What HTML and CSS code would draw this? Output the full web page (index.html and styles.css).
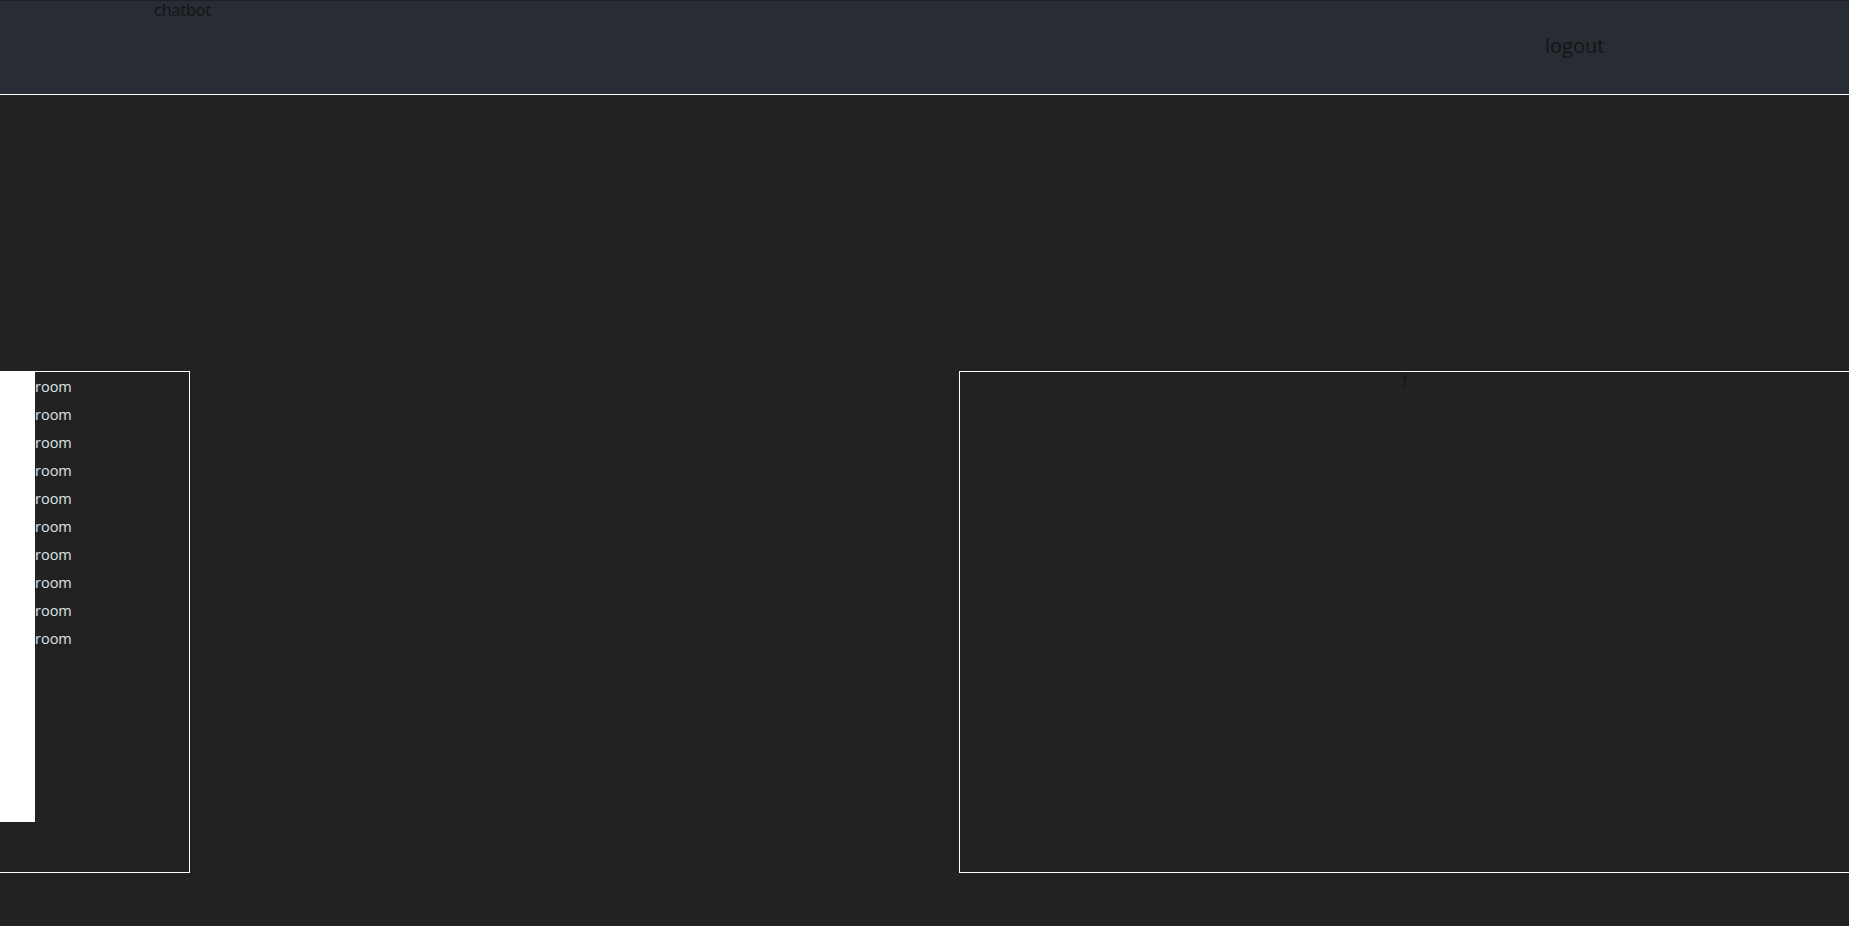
FILE: index.html
```html
<!DOCTYPE html>
<html lang="en">
<head>
<meta charset="utf-8">
<title>chatbot</title>
<link rel="stylesheet" href="styles.css">
</head>
<body>
<div class="app">
  <header class="top-bar">
    <div class="brand">chatbot</div>
    <div class="logout">logout</div>
  </header>
  <main class="workspace">
    <section class="rooms-panel">
      <div class="rooms-strip"></div>
      <ul class="room-list">
        <li class="room-item">room</li>
        <li class="room-item">room</li>
        <li class="room-item">room</li>
        <li class="room-item">room</li>
        <li class="room-item">room</li>
        <li class="room-item">room</li>
        <li class="room-item">room</li>
        <li class="room-item">room</li>
        <li class="room-item">room</li>
        <li class="room-item">room</li>
      </ul>
    </section>
    <section class="chat-panel">
      <div class="chat-count">1</div>
    </section>
  </main>
</div>
</body>
</html>
```

FILE: styles.css
```css
html, body {
  margin: 0;
  padding: 0;
  background: #222222;
}

body {
  font-family: "Open Sans", "DejaVu Sans", sans-serif;
}

::-webkit-scrollbar {
  width: 4px;
  height: 4px;
  background: #222222;
}

::-webkit-scrollbar-thumb {
  background: #959595;
}

::-webkit-scrollbar-corner {
  background: #2a2a2a;
}

.app {
  width: 1850px;
}

.top-bar {
  display: flex;
  align-items: flex-start;
  height: 93px;
  background: #282c34;
  border-top: 1px solid #1d2026;
  border-bottom: 1px solid #ffffff;
  padding-left: 154px;
  color: #141414;
}

.brand {
  width: 1391px;
  font-size: 16px;
  line-height: 18px;
}

.logout {
  font-size: 20px;
  line-height: 24px;
  margin-top: 33px;
}

.workspace {
  display: flex;
  align-items: flex-start;
  padding-top: 276px;
  padding-bottom: 53px;
}

.rooms-panel {
  display: flex;
  align-items: flex-start;
  width: 189px;
  height: 500px;
  border: 1px solid #ffffff;
  border-left: none;
  flex-shrink: 0;
}

.rooms-strip {
  width: 35px;
  height: 450px;
  background: #ffffff;
  flex-shrink: 0;
}

.room-list {
  list-style: none;
  margin: 0;
  padding: 1px 0 0;
}

.room-item {
  height: 28px;
  line-height: 28px;
  font-size: 14.5px;
  color: #dfe3e8;
}

.chat-panel {
  margin-left: 769px;
  width: 889px;
  height: 500px;
  border: 1px solid #ffffff;
  flex-shrink: 0;
  text-align: center;
}

.chat-count {
  font-size: 16px;
  line-height: 18px;
  color: #141414;
}
```
